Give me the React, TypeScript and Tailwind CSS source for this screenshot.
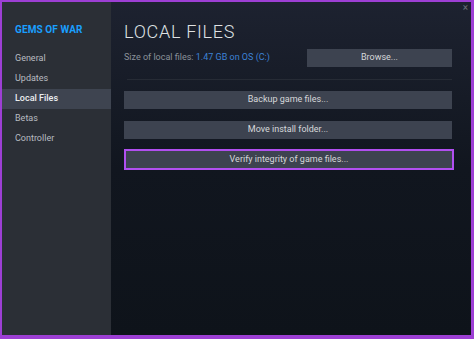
const navItems = ["General", "Updates", "Local Files", "Betas", "Controller"];

function ActionButton({ label, highlight }: { label: string; highlight?: boolean }) {
  return (
    <button
      type="button"
      className={
        highlight
          ? "flex h-[21px] w-[calc(100%+2px)] items-center justify-center border-2 border-[#b14ff0] bg-[#3d4350] text-[9px] text-[#d6d8da]"
          : "flex h-[18px] w-full items-center justify-center bg-[#3d4350] text-[9px] text-[#d6d8da]"
      }
    >
      {label}
    </button>
  );
}

export default function App() {
  return (
    <div
      className="flex h-[339px] w-[474px] border-t-2 border-r-[3px] border-b-4 border-l-2 border-[#9d3fd4] bg-[#0e131a]"
      style={{ fontFamily: "Roboto, 'Noto Sans', Arial, sans-serif" }}
    >
      <aside className="flex w-[109px] shrink-0 flex-col bg-[#2b2f36] pt-[21px]">
        <div className="pl-[13px] text-[10px] leading-[14px] font-bold tracking-[0.01em] text-[#1a9fff]">
          GEMS OF WAR
        </div>
        <nav className="mt-[12px] flex flex-col">
          {navItems.map((item) => (
            <div
              key={item}
              className={
                item === "Local Files"
                  ? "flex h-[20px] items-center bg-[#3e4450] pl-[13px] text-[9px] font-medium text-[#eceef0]"
                  : "flex h-[20px] items-center pl-[13px] text-[9px] text-[#b8bcc1]"
              }
            >
              {item}
            </div>
          ))}
        </nav>
      </aside>

      <main className="relative flex flex-1 flex-col bg-gradient-to-b from-[#1d2230] via-[#11161f] to-[#0e131a] pt-[19px] pr-[19px] pl-[13px]">
        <span className="absolute top-[1px] right-[3px] text-[10px] leading-[10px] text-[#6b7079]">
          ×
        </span>
        <h1 className="h-[22px] text-[18px] leading-[22px] font-light tracking-[0.04em] text-[#dfe1e3]">
          LOCAL FILES
        </h1>
        <div className="mt-[6px] flex items-center justify-between">
          <span className="text-[9px] text-[#8b929a]">
            Size of local files: <span className="text-[#3d82d6]">1.47 GB on OS (C:)</span>
          </span>
          <button
            type="button"
            className="flex h-[18px] w-[145px] items-center justify-center bg-[#3d4350] text-[9px] text-[#d6d8da]"
          >
            Browse...
          </button>
        </div>
        <div className="mt-[12px] ml-[3px] h-px bg-[#262b35]" />
        <div className="mt-[11px]">
          <ActionButton label="Backup game files..." />
        </div>
        <div className="mt-[12px]">
          <ActionButton label="Move install folder..." />
        </div>
        <div className="mt-[10px]">
          <ActionButton label="Verify integrity of game files..." highlight />
        </div>
      </main>
    </div>
  );
}
